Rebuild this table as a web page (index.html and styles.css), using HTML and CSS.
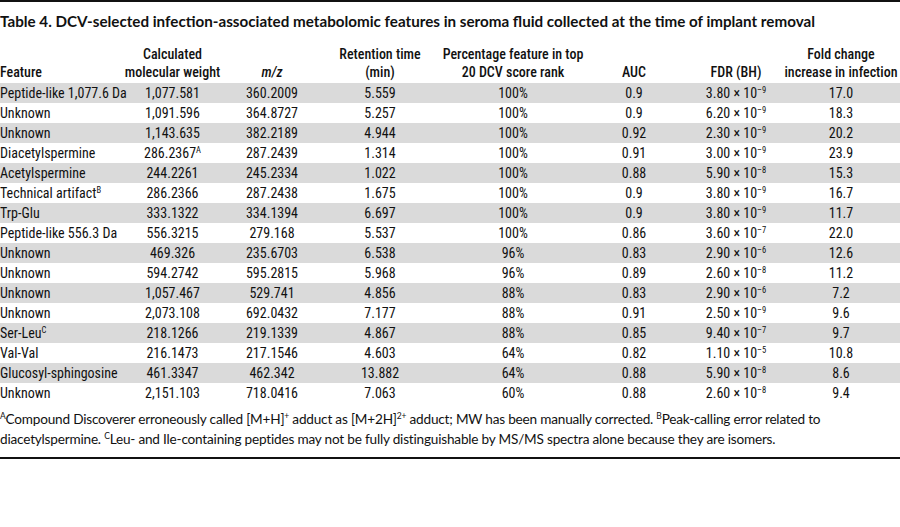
FILE: index.html
```html
<!DOCTYPE html>
<html lang="en">
<head>
<meta charset="utf-8">
<title>Table 4</title>
<link rel="stylesheet" href="styles.css">
</head>
<body>
<div class="page">
  <h1 class="title">Table 4. DCV-selected infection-associated metabolomic features in seroma fluid collected at the time of implant removal</h1>
  <div class="table">
    <div class="row head">
      <div class="cell first"><span>Feature</span></div>
      <div class="cell"><span>Calculated<br>molecular weight</span></div>
      <div class="cell"><span><i>m/z</i></span></div>
      <div class="cell"><span>Retention time<br>(min)</span></div>
      <div class="cell"><span>Percentage feature in top<br>20 DCV score rank</span></div>
      <div class="cell"><span>AUC</span></div>
      <div class="cell"><span>FDR (BH)</span></div>
      <div class="cell"><span>Fold change<br>increase in infection</span></div>
    </div>
    <div class="row odd">
      <div class="cell first"><span>Peptide-like 1,077.6 Da</span></div>
      <div class="cell"><span>1,077.581</span></div>
      <div class="cell"><span>360.2009</span></div>
      <div class="cell"><span>5.559</span></div>
      <div class="cell"><span>100%</span></div>
      <div class="cell"><span>0.9</span></div>
      <div class="cell"><span>3.80 × 10<sup>–9</sup></span></div>
      <div class="cell"><span>17.0</span></div>
    </div>
    <div class="row">
      <div class="cell first"><span>Unknown</span></div>
      <div class="cell"><span>1,091.596</span></div>
      <div class="cell"><span>364.8727</span></div>
      <div class="cell"><span>5.257</span></div>
      <div class="cell"><span>100%</span></div>
      <div class="cell"><span>0.9</span></div>
      <div class="cell"><span>6.20 × 10<sup>–9</sup></span></div>
      <div class="cell"><span>18.3</span></div>
    </div>
    <div class="row odd">
      <div class="cell first"><span>Unknown</span></div>
      <div class="cell"><span>1,143.635</span></div>
      <div class="cell"><span>382.2189</span></div>
      <div class="cell"><span>4.944</span></div>
      <div class="cell"><span>100%</span></div>
      <div class="cell"><span>0.92</span></div>
      <div class="cell"><span>2.30 × 10<sup>–9</sup></span></div>
      <div class="cell"><span>20.2</span></div>
    </div>
    <div class="row">
      <div class="cell first"><span>Diacetylspermine</span></div>
      <div class="cell"><span>286.2367<sup>A</sup></span></div>
      <div class="cell"><span>287.2439</span></div>
      <div class="cell"><span>1.314</span></div>
      <div class="cell"><span>100%</span></div>
      <div class="cell"><span>0.91</span></div>
      <div class="cell"><span>3.00 × 10<sup>–9</sup></span></div>
      <div class="cell"><span>23.9</span></div>
    </div>
    <div class="row odd">
      <div class="cell first"><span>Acetylspermine</span></div>
      <div class="cell"><span>244.2261</span></div>
      <div class="cell"><span>245.2334</span></div>
      <div class="cell"><span>1.022</span></div>
      <div class="cell"><span>100%</span></div>
      <div class="cell"><span>0.88</span></div>
      <div class="cell"><span>5.90 × 10<sup>–8</sup></span></div>
      <div class="cell"><span>15.3</span></div>
    </div>
    <div class="row">
      <div class="cell first"><span>Technical artifact<sup>B</sup></span></div>
      <div class="cell"><span>286.2366</span></div>
      <div class="cell"><span>287.2438</span></div>
      <div class="cell"><span>1.675</span></div>
      <div class="cell"><span>100%</span></div>
      <div class="cell"><span>0.9</span></div>
      <div class="cell"><span>3.80 × 10<sup>–9</sup></span></div>
      <div class="cell"><span>16.7</span></div>
    </div>
    <div class="row odd">
      <div class="cell first"><span>Trp-Glu</span></div>
      <div class="cell"><span>333.1322</span></div>
      <div class="cell"><span>334.1394</span></div>
      <div class="cell"><span>6.697</span></div>
      <div class="cell"><span>100%</span></div>
      <div class="cell"><span>0.9</span></div>
      <div class="cell"><span>3.80 × 10<sup>–9</sup></span></div>
      <div class="cell"><span>11.7</span></div>
    </div>
    <div class="row">
      <div class="cell first"><span>Peptide-like 556.3 Da</span></div>
      <div class="cell"><span>556.3215</span></div>
      <div class="cell"><span>279.168</span></div>
      <div class="cell"><span>5.537</span></div>
      <div class="cell"><span>100%</span></div>
      <div class="cell"><span>0.86</span></div>
      <div class="cell"><span>3.60 × 10<sup>–7</sup></span></div>
      <div class="cell"><span>22.0</span></div>
    </div>
    <div class="row odd">
      <div class="cell first"><span>Unknown</span></div>
      <div class="cell"><span>469.326</span></div>
      <div class="cell"><span>235.6703</span></div>
      <div class="cell"><span>6.538</span></div>
      <div class="cell"><span>96%</span></div>
      <div class="cell"><span>0.83</span></div>
      <div class="cell"><span>2.90 × 10<sup>–6</sup></span></div>
      <div class="cell"><span>12.6</span></div>
    </div>
    <div class="row">
      <div class="cell first"><span>Unknown</span></div>
      <div class="cell"><span>594.2742</span></div>
      <div class="cell"><span>595.2815</span></div>
      <div class="cell"><span>5.968</span></div>
      <div class="cell"><span>96%</span></div>
      <div class="cell"><span>0.89</span></div>
      <div class="cell"><span>2.60 × 10<sup>–8</sup></span></div>
      <div class="cell"><span>11.2</span></div>
    </div>
    <div class="row odd">
      <div class="cell first"><span>Unknown</span></div>
      <div class="cell"><span>1,057.467</span></div>
      <div class="cell"><span>529.741</span></div>
      <div class="cell"><span>4.856</span></div>
      <div class="cell"><span>88%</span></div>
      <div class="cell"><span>0.83</span></div>
      <div class="cell"><span>2.90 × 10<sup>–6</sup></span></div>
      <div class="cell"><span>7.2</span></div>
    </div>
    <div class="row">
      <div class="cell first"><span>Unknown</span></div>
      <div class="cell"><span>2,073.108</span></div>
      <div class="cell"><span>692.0432</span></div>
      <div class="cell"><span>7.177</span></div>
      <div class="cell"><span>88%</span></div>
      <div class="cell"><span>0.91</span></div>
      <div class="cell"><span>2.50 × 10<sup>–9</sup></span></div>
      <div class="cell"><span>9.6</span></div>
    </div>
    <div class="row odd">
      <div class="cell first"><span>Ser-Leu<sup>C</sup></span></div>
      <div class="cell"><span>218.1266</span></div>
      <div class="cell"><span>219.1339</span></div>
      <div class="cell"><span>4.867</span></div>
      <div class="cell"><span>88%</span></div>
      <div class="cell"><span>0.85</span></div>
      <div class="cell"><span>9.40 × 10<sup>–7</sup></span></div>
      <div class="cell"><span>9.7</span></div>
    </div>
    <div class="row">
      <div class="cell first"><span>Val-Val</span></div>
      <div class="cell"><span>216.1473</span></div>
      <div class="cell"><span>217.1546</span></div>
      <div class="cell"><span>4.603</span></div>
      <div class="cell"><span>64%</span></div>
      <div class="cell"><span>0.82</span></div>
      <div class="cell"><span>1.10 × 10<sup>–5</sup></span></div>
      <div class="cell"><span>10.8</span></div>
    </div>
    <div class="row odd">
      <div class="cell first"><span>Glucosyl-sphingosine</span></div>
      <div class="cell"><span>461.3347</span></div>
      <div class="cell"><span>462.342</span></div>
      <div class="cell"><span>13.882</span></div>
      <div class="cell"><span>64%</span></div>
      <div class="cell"><span>0.88</span></div>
      <div class="cell"><span>5.90 × 10<sup>–8</sup></span></div>
      <div class="cell"><span>8.6</span></div>
    </div>
    <div class="row">
      <div class="cell first"><span>Unknown</span></div>
      <div class="cell"><span>2,151.103</span></div>
      <div class="cell"><span>718.0416</span></div>
      <div class="cell"><span>7.063</span></div>
      <div class="cell"><span>60%</span></div>
      <div class="cell"><span>0.88</span></div>
      <div class="cell"><span>2.60 × 10<sup>–8</sup></span></div>
      <div class="cell"><span>9.4</span></div>
    </div>
  </div>
  <p class="notes"><sup>A</sup>Compound Discoverer erroneously called [M+H]<sup>+</sup> adduct as [M+2H]<sup>2+</sup> adduct; MW has been manually corrected. <sup>B</sup>Peak-calling error related to diacetylspermine. <sup>C</sup>Leu- and Ile-containing peptides may not be fully distinguishable by MS/MS spectra alone because they are isomers.</p>
</div>
</body>
</html>
```
FILE: styles.css
```css
html, body {
  margin: 0;
  padding: 0;
  background: #ffffff;
}

.page {
  width: 900px;
  border-top: 2px solid #111111;
  border-bottom: 2px solid #111111;
  color: #111111;
}

.title {
  margin: 0;
  padding: 9px 0 0 0;
  font-family: "Lato", "Open Sans", sans-serif;
  font-weight: 700;
  font-size: 15.2px;
  line-height: 20px;
  white-space: nowrap;
}

.table {
  margin-top: 14px;
  font-family: "Roboto Condensed", "Roboto", sans-serif;
  font-stretch: 75%;
  font-size: 14px;
}

.row {
  display: grid;
  grid-template-columns: 122px 101px 98px 118px 148px 94px 110px 100px;
  height: 20px;
  line-height: 20px;
}

.row.odd {
  background: #dadada;
}

.row.head {
  height: 38px;
  line-height: 18px;
  align-items: end;
  padding-bottom: 2px;
  box-sizing: border-box;
  font-weight: 500;
}

.cell {
  display: flex;
  justify-content: center;
  white-space: nowrap;
  text-align: center;
}

.cell.first {
  justify-content: flex-start;
  text-align: left;
}

.cell i {
  font-style: italic;
}

.cell sup {
  font-size: 8.5px;
  line-height: 0;
  vertical-align: 5px;
}

.notes {
  margin: 0;
  padding: 6px 0 8px 0;
  font-family: "Lato", "Open Sans", sans-serif;
  font-size: 13.6px;
  letter-spacing: -0.2px;
  line-height: 20px;
}

.notes sup {
  font-size: 8.5px;
  line-height: 1;
  vertical-align: 5px;
}
```
